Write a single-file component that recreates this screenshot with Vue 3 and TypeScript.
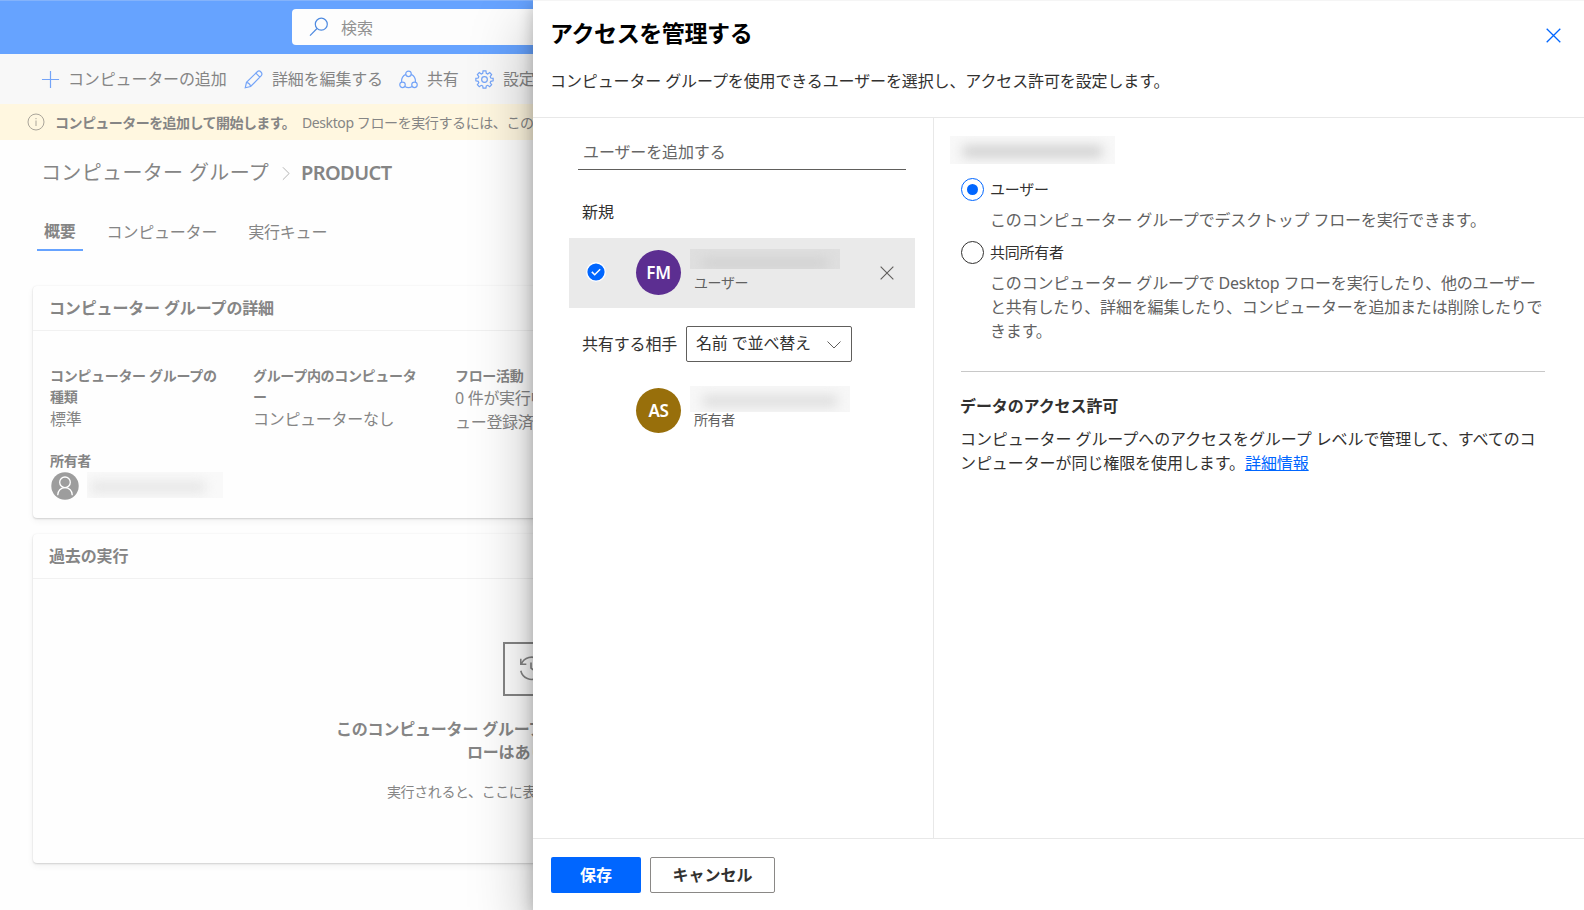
<script setup lang="ts">
import { ref } from 'vue'

interface RoleOption {
  id: string
  label: string
  lines: string[]
}

const selectedRole = ref('user')
const roles: RoleOption[] = [
  { id: 'user', label: 'ユーザー', lines: ['このコンピューター グループでデスクトップ フローを実行できます。'] },
  {
    id: 'coowner',
    label: '共同所有者',
    lines: [
      'このコンピューター グループで Desktop フローを実行したり、他のユーザー',
      'と共有したり、詳細を編集したり、コンピューターを追加または削除したりで',
      'きます。',
    ],
  },
]
const tabs = ['概要', 'コンピューター', '実行キュー']
</script>

<template>
  <div class="app">
    <div class="page">
      <header class="topbar">
        <div class="search">
          <svg class="search-icon" viewBox="0 0 20 20"><circle cx="12.3" cy="7.2" r="6" /><path d="M8 11.5 1 18.6" /></svg>
          <span>検索</span>
        </div>
      </header>

      <nav class="commands">
        <div class="command c-add">
          <svg viewBox="0 0 20 20"><path d="M10 1v18M1 10h18" /></svg><span>コンピューターの追加</span>
        </div>
        <div class="command c-edit">
          <svg viewBox="0 0 20 20"><path d="M1.3 18.7 2.6 13 14 1.8c2.600-2.200 6.200 1.600 4.200 4.200L7 17.400ZM12.500 3.300l4.200 4.200M2.600 13c2 .3 3.800 2 4.400 4.400" /></svg><span>詳細を編集する</span>
        </div>
        <div class="command c-share">
          <svg viewBox="0 0 20 20"><circle cx="10" cy="4" r="2.900" /><circle cx="3.700" cy="15.600" r="2.900" /><circle cx="16.300" cy="15.600" r="2.900" /><path d="M7.200 4.600C4 6 2.500 9 2.700 12.800M12.800 4.600c3.200 1.400 4.700 4.400 4.500 8.200M6.200 17.300c2.300 1.400 5.300 1.400 7.600 0" /></svg><span>共有</span>
        </div>
        <div class="command c-settings">
          <svg viewBox="0 0 20 20"><circle cx="10" cy="10" r="3" /><path d="M8.500 1h3l.4 2.500 1.500.7 2.100-1.500 2 2-1.500 2.200.6 1.500 2.500.4v2.600l-2.500.5-.6 1.500 1.500 2.100-2 2-2.100-1.400-1.500.6-.4 2.400h-3l-.4-2.400-1.500-.6-2.100 1.400-2-2L4 13.400l-.6-1.500-2.500-.5V8.800l2.500-.4L4 6.900 2.500 4.700l2-2 2.100 1.500 1.500-.7Z" /></svg><span>設定</span>
        </div>
      </nav>

      <div class="banner">
        <svg viewBox="0 0 18 18"><circle cx="9" cy="9" r="8" /><path d="M9 7.500v5.500M9 5v1.200" /></svg>
        <strong>コンピューターを追加して開始します。</strong>
        <span>Desktop フローを実行するには、このグループに</span>
      </div>

      <div class="breadcrumb">
        <span class="crumb">コンピューター グループ</span>
        <svg viewBox="0 0 9 16"><path d="m1 1 7 7-7 7" /></svg>
        <strong>PRODUCT</strong>
      </div>

      <div class="tabs">
        <div v-for="(tab, i) in tabs" :key="tab" class="tab" :class="{ active: i === 0 }">{{ tab }}</div>
      </div>

      <section class="card details">
        <h2>コンピューター グループの詳細</h2>
        <div class="facts">
          <div class="fact">
            <div class="label">コンピューター グループの<br />種類</div>
            <div class="value">標準</div>
          </div>
          <div class="fact">
            <div class="label">グループ内のコンピュータ<br />ー</div>
            <div class="value">コンピューターなし</div>
          </div>
          <div class="fact">
            <div class="label">フロー活動</div>
            <div class="value tall">0 件が実行中、0 件がキ<br />ュー登録済み</div>
          </div>
        </div>
        <div class="owner-label label">所有者</div>
        <div class="owner">
          <svg viewBox="0 0 28 28"><circle class="disc" cx="14" cy="14" r="13.700" /><circle cx="14" cy="10.300" r="5.300" /><path d="M6.700 23.200c0-4.600 3.200-7.500 7.300-7.500s7.300 2.900 7.300 7.500" /></svg>
          <i class="redacted owner-name"></i>
        </div>
      </section>

      <section class="card runs">
        <h2>過去の実行</h2>
        <div class="history">
          <svg viewBox="0 0 28 28"><path d="M3 4v6h6M3.500 10A12 12 0 1 1 3 17M14 8v6l5 4" /></svg>
        </div>
        <p class="empty-title">このコンピューター グループで実行されたフ</p>
        <p class="empty-title second">ローはありません</p>
        <p class="empty-text">実行されると、ここに表示されます</p>
      </section>
    </div>

    <aside class="drawer">
      <header class="drawer-head">
        <div>
          <h1>アクセスを管理する</h1>
          <p>コンピューター グループを使用できるユーザーを選択し、アクセス許可を設定します。</p>
        </div>
        <svg class="close" viewBox="0 0 15 15"><path d="m.7.7 13.600 13.600M14.300.7.7 14.300" /></svg>
      </header>

      <div class="drawer-body">
        <div class="people">
          <div class="add-user">ユーザーを追加する</div>
          <div class="new-label">新規</div>
          <div class="person selected">
            <svg class="check" viewBox="0 0 20 20"><circle cx="10" cy="10" r="9.300" /><path d="m5.800 9.900 2.900 2.900 5.500-5.600" /></svg>
            <div class="avatar purple">FM</div>
            <div class="person-text"><i class="redacted grey"></i><span>ユーザー</span></div>
            <svg class="remove" viewBox="0 0 15 15"><path d="m.7.7 13.600 13.600M14.300.7.7 14.300" /></svg>
          </div>
          <div class="sort">
            <span>共有する相手</span>
            <div class="dropdown">
              <span>名前 で並べ替え</span>
              <svg viewBox="0 0 14 8"><path d="m.5.5 6.500 6.500 6.500-6.500" /></svg>
            </div>
          </div>
          <div class="person owner-person">
            <div class="avatar gold">AS</div>
            <div class="person-text"><i class="redacted light"></i><span>所有者</span></div>
          </div>
        </div>

        <div class="permissions">
          <i class="redacted heading-name"></i>
          <div v-for="role in roles" :key="role.id" class="role">
            <label @click="selectedRole = role.id">
              <b class="radio" :class="{ on: selectedRole === role.id }"></b>{{ role.label }}
            </label>
            <div class="role-text"><div v-for="line in role.lines" :key="line">{{ line }}</div></div>
          </div>
          <hr />
          <h3>データのアクセス許可</h3>
          <div class="access">コンピューター グループへのアクセスをグループ レベルで管理して、すべてのコ</div>
          <div class="access">ンピューターが同じ権限を使用します。<a>詳細情報</a></div>
        </div>
      </div>

      <footer>
        <button class="save">保存</button>
        <button class="cancel">キャンセル</button>
      </footer>
    </aside>
  </div>
</template>

<style>
html, body { margin: 0; overflow: hidden; }
</style>

<style scoped>
* { box-sizing: border-box; }
.app {
  position: relative; width: 1584px; height: 910px; overflow: hidden; background: #fefefe;
  font-family: "Noto Sans", "Noto Sans CJK JP", sans-serif; font-size: 16px; line-height: 24px; white-space: nowrap;
}
svg { fill: none; stroke: currentColor; flex: none; display: block; }
h1, h2, h3, p { margin: 0; }
.page { color: #858585; }
.topbar { height: 54px; padding: 8px 0 0 292px; background: #66a3ff; border-top: 1px solid #84b3fb; }
.search { height: 36px; width: 700px; border-radius: 4px; background: #fdfdfd; display: flex; align-items: center; padding: 1px 0 0 17px; gap: 12px; color: #929292; }
.search-icon { width: 20px; height: 20px; margin-top: -1px; color: #4e8ae0; stroke-width: 1.200; }
.commands { height: 50px; background: #f8f8f8; display: flex; align-items: center; padding-left: 41px; }
.command { display: flex; align-items: center; gap: 8px; letter-spacing: -.15px; }
.command svg { width: 19px; height: 19px; color: #74a4f8; stroke-width: 1.250; }
.c-add { width: 203px; }
.c-edit { width: 155px; }
.c-edit, .c-share, .c-settings { gap: 9px; }
.c-share { width: 76px; }
.banner { height: 36px; background: #fff7e0; display: flex; align-items: center; padding-left: 27px; font-size: 14px; }
.banner svg { width: 18px; height: 18px; color: #aaa59a; margin: -1px 10px 0 0; }
.banner strong { width: 247px; margin-top: 2px; font-weight: 600; letter-spacing: -.55px; }
.banner span { margin-top: 2px; letter-spacing: -.4px; }
.breadcrumb { height: 66px; padding-left: 41px; display: flex; align-items: center; font-size: 20px; line-height: 30px; }
.crumb { width: 241px; letter-spacing: .35px; }
.breadcrumb svg { width: 8px; height: 15px; margin-right: 11px; color: #aaa; }
.breadcrumb strong { font-weight: 600; letter-spacing: -.6px; }
.tabs { height: 80px; display: flex; padding: 8px 0 0 37px; }
.tab { height: 37px; padding: 6px 7px; margin-right: 17px; letter-spacing: -.2px; }
.tab.active { font-weight: 600; padding: 5px 7px; border-bottom: 2px solid #66a3ff; }
.card { margin-left: 33px; width: 1519px; border-radius: 4px; background: #fefefe; box-shadow: 0 1px 2px rgba(0,0,0,.14), 0 0 2px rgba(0,0,0,.06), 0 3px 7px rgba(0,0,0,.05); }
.card h2 { height: 45px; border-bottom: 1px solid #f1f1f1; padding-left: 16px; font-size: 16px; line-height: 45px; font-weight: 600; letter-spacing: -.15px; }
.details { height: 232px; }
.facts { display: flex; padding: 34px 0 0 17px; height: 119px; }
.fact { width: 203px; }
.fact:nth-child(2) { width: 202px; }
.label { font-size: 14px; line-height: 21px; font-weight: 600; letter-spacing: -.32px; }
.value { letter-spacing: -.3px; line-height: 24px; }
.owner-label { padding-left: 17px; }
.owner { display: flex; padding: 1px 0 0 18px; }
.owner svg { width: 28px; height: 28px; stroke: #fff; stroke-width: 1.300; }
.owner svg .disc { fill: #9d9d9d; stroke: none; }
.redacted { display: block; overflow: hidden; }
.redacted::after { content: ""; display: block; width: 84%; height: 40%; margin: 10px auto 0; filter: blur(6px); background: #dadada; }
.owner-name { width: 136px; height: 26px; margin-left: 8px; background: #f9f9f9; }
.owner-name::after { margin-left: 4px; background: #e3e3e3; }
.runs { margin-top: 16px; height: 329px; }
.history { width: 54px; height: 54px; margin: 63px 0 0 470px; border: 2px solid #858585; padding: 11px 0 0 13px; }
.history svg { width: 26px; height: 26px; stroke-width: 1.700; }
.empty-title { margin: 21px 0 0 303px; font-weight: 600; letter-spacing: -.2px; }
.empty-title.second { margin: -1px 0 0 434px; }
.empty-text { margin: 16px 0 0 354px; font-size: 14px; letter-spacing: -.4px; }

.drawer { position: absolute; left: 533px; top: 0; width: 1051px; height: 910px; background: #fff; border-top: 1px solid #f5f5f5; display: flex; flex-direction: column; color: #323130; box-shadow: 0 26px 58px rgba(0,0,0,.28), 0 5px 15px rgba(0,0,0,.24); }
.drawer-head { height: 117px; display: flex; justify-content: space-between; padding: 15px 23px 0 17px; border-bottom: 1px solid #e8e8e8; }
h1 { font-size: 23px; line-height: 34px; font-weight: 600; letter-spacing: -.4px; color: #000; }
.drawer-head p { margin-top: 18px; line-height: 26px; letter-spacing: -.12px; }
.close { width: 15px; height: 15px; margin-top: 12px; color: #06f; stroke-width: 1.300; }
.drawer-body { height: 720px; display: flex; }
.people { width: 401px; border-right: 1px solid #e8e8e8; padding-left: 36px; }
.add-user { width: 328px; height: 37px; margin: 15px 0 0 9px; padding: 7px 5px 0; border-bottom: 1px solid #605e5c; color: #666; letter-spacing: -.12px; }
.new-label { margin: 30px 0 14px 13px; }
.person { display: flex; align-items: center; height: 70px; width: 346px; padding-bottom: 2px; }
.person.selected { background: #eaeaea; }
.check { width: 20px; height: 20px; margin: 0 0 0 17px; }
.check circle { fill: #06f; stroke: #fff; stroke-width: 1.400; }
.check path { stroke: #fff; stroke-width: 1.500; }
.avatar { width: 45px; height: 45px; border-radius: 50%; margin-left: 30px; color: #fff; text-align: center; line-height: 45px; font-size: 17px; font-weight: 600; letter-spacing: -.3px; flex: none; }
.avatar.purple { background: #5c2e91; }
.avatar.gold { background: #986f0b; }
.owner-person .avatar { margin-left: 67px; }
.person-text { margin-left: 9px; width: 160px; height: 48px; }
.person-text span { display: block; margin-left: 4px; font-size: 14px; color: #616161; letter-spacing: -.4px; }
.grey { width: 150px; height: 20px; margin: 1px 0 2px; background: #dfdfdf; }
.grey::after { background: #cecece; }
.light { width: 160px; height: 26px; margin: 0 0 -4px; background: #f7f7f7; }
.remove { width: 14px; height: 14px; margin: 2px 0 0 30px; color: #605e5c; stroke-width: 1.200; }
.sort { display: flex; align-items: center; margin: 18px 0 0 13px; }
.sort > span { width: 104px; letter-spacing: -.15px; }
.dropdown { width: 166px; height: 36px; border: 1px solid #605e5c; border-radius: 2px; display: flex; align-items: center; justify-content: space-between; padding: 0 10px 3px 9px; letter-spacing: -.15px; }
.dropdown svg { width: 14px; height: 8px; margin-top: 4px; color: #605e5c; }
.owner-person { margin-top: 14px; }
.permissions { padding: 18px 0 0 16px; }
.heading-name { width: 165px; height: 28px; margin-bottom: 10px; background: #f8f8f8; }
.heading-name::after { background: #cdcdcd; }
.role { margin-left: 11px; }
.role label { display: flex; align-items: center; height: 30px; gap: 6px; font-size: 15px; letter-spacing: -.25px; }
.radio { width: 23px; height: 23px; border: 1px solid #323130; border-radius: 50%; display: grid; place-items: center; }
.radio.on { border-color: #06f; }
.radio.on::after { content: ""; width: 11px; height: 11px; border-radius: 50%; background: #06f; }
.role-text { margin-left: 29px; padding: 4px 0 5px; color: #616161; letter-spacing: -.18px; }
hr { width: 584px; margin: 23px 0 0 11px; border: 0; border-top: 1px solid #c8c8c8; }
h3 { margin: 22px 0 9px 10px; font-size: 16px; line-height: 24px; font-weight: 600; letter-spacing: -.1px; }
.access { margin-left: 10px; letter-spacing: -.08px; }
.access a { color: #06f; text-decoration: underline; }
footer { flex: 1; display: flex; gap: 9px; padding: 18px 18px 0; border-top: 1px solid #e8e8e8; }
button { height: 36px; border-radius: 2px; font: 600 16px/32px "Noto Sans", "Noto Sans CJK JP", sans-serif; padding: 0; }
.save { width: 90px; border: 0; background: #06f; color: #fff; }
.cancel { width: 125px; border: 1px solid #8a8886; background: #fff; color: #323130; }
</style>
